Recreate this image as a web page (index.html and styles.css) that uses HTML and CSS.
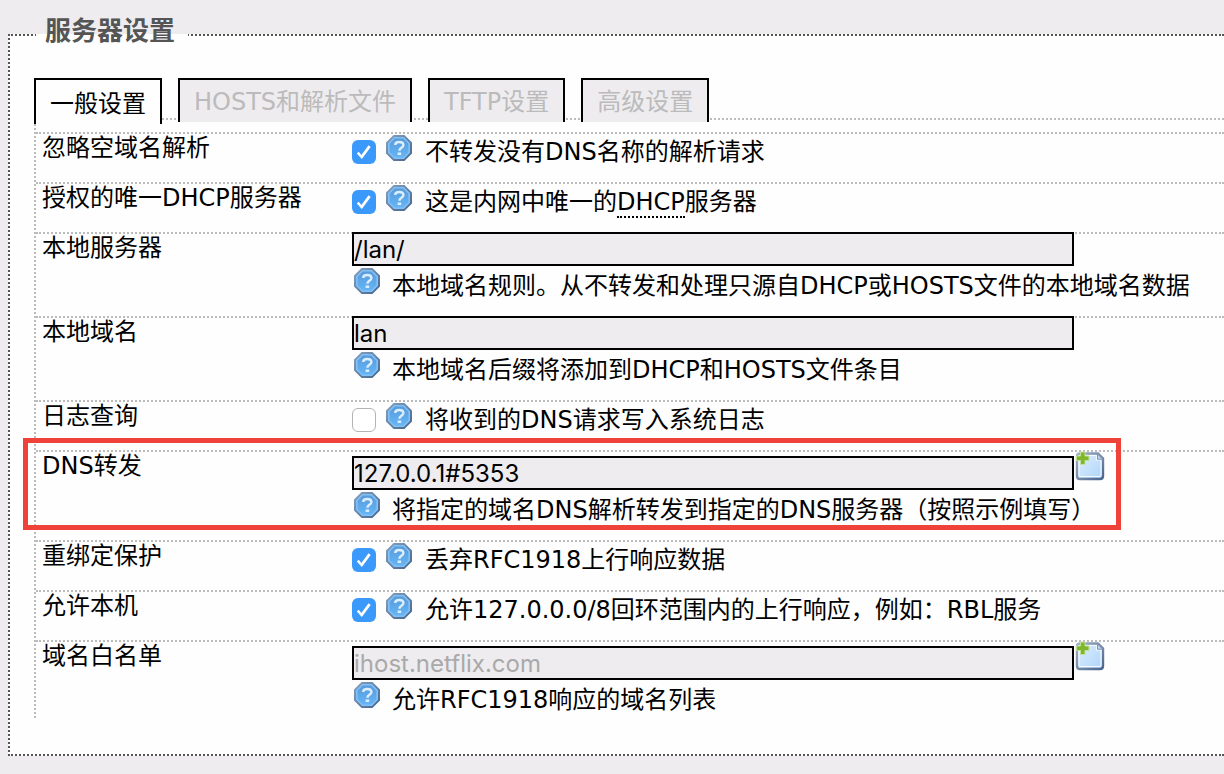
FILE: index.html
```
<!DOCTYPE html>
<html lang="zh-CN">
<head>
<meta charset="utf-8">
<title>服务器设置</title>
<link rel="stylesheet" href="styles.css">
</head>
<body>
<svg class="defs" aria-hidden="true">
  <defs>
    <linearGradient id="blue" x1="0" y1="0" x2="0" y2="1">
      <stop offset="0" stop-color="#5598d8"/><stop offset="1" stop-color="#66b8fa"/>
    </linearGradient>
    <linearGradient id="edge" x1="0" y1="0" x2="1" y2="1">
      <stop offset="0" stop-color="#86a0be"/><stop offset="1" stop-color="#45678f"/>
    </linearGradient>
    <linearGradient id="sheet" x1="0" y1="0" x2="1" y2="1">
      <stop offset="0" stop-color="#e0eefd"/><stop offset="1" stop-color="#acd5fb"/>
    </linearGradient>
    <linearGradient id="rim" x1="0" y1="0" x2="1" y2="1">
      <stop offset="0" stop-color="#a3b0c4"/><stop offset="1" stop-color="#4c6690"/>
    </linearGradient>
    <symbol id="help" viewBox="0 0 28 28">
      <path d="M9 2h10l7 7v10l-7 7H9l-7-7V9z" fill="url(#blue)" stroke="url(#edge)" stroke-width="2"/>
      <path d="M9.500 3.800h9l5.700 5.700v9l-5.700 5.700h-9l-5.700-5.700v-9z" fill="none" stroke="#84c0f3" stroke-width="1.600"/>
      <path d="M10.200 11C10.200 8.800 11.800 8 14.200 8s4.200 1 4.200 3.100c0 2.700-4 2.700-4 5.600" fill="none" stroke="#dceefe" stroke-width="2.400"/>
      <rect x="12.600" y="18.500" width="3.600" height="2.500" fill="#dceefe"/>
    </symbol>
    <symbol id="add" viewBox="0 0 30 30">
      <path d="M5 2.500h18l5 5V25q0 3-3 3H5q-3 0-3-3V5.500q0-3 3-3z" fill="url(#sheet)" stroke="url(#rim)" stroke-width="2.400"/>
      <path d="M5 4.500h16.500v4.500H26v15q0 1.500-1.500 1.500h-19Q4 25.500 4 24V5.500z" fill="none" stroke="#f3f9ff" stroke-width="1.200"/>
      <path d="M22.500 3v5.200h5.200z" fill="#c4d8ee" stroke="#7d93b2" stroke-width="1"/>
      <path d="M5.500 1h4.500v4h4v4.500h-4v4H5.500v-4h-4V5h4z" fill="#7fb82d" stroke="#c3e09a" stroke-width="1"/>
    </symbol>
  </defs>
</svg>
<form>
<fieldset class="panel">
  <legend class="title">服务器设置</legend>
  <nav class="tabs">
    <a class="tab active" href="#general">一般设置</a>
    <a class="tab" href="#hosts">HOSTS和解析文件</a>
    <a class="tab" href="#tftp">TFTP设置</a>
    <a class="tab" href="#advanced">高级设置</a>
  </nav>
  <div class="options" id="general">
    <div class="row">
      <label class="name" for="domainneeded">忽略空域名解析</label>
      <div class="field check">
        <input class="box" type="checkbox" id="domainneeded" checked>
        <svg class="help"><use href="#help"/></svg><span class="hint">不转发没有DNS名称的解析请求</span>
      </div>
    </div>
    <div class="row">
      <label class="name" for="authoritative">授权的唯一DHCP服务器</label>
      <div class="field check">
        <input class="box" type="checkbox" id="authoritative" checked>
        <svg class="help"><use href="#help"/></svg><span class="hint">这是内网中唯一的<abbr class="term">DHCP</abbr>服务器</span>
      </div>
    </div>
    <div class="row tall">
      <label class="name" for="local">本地服务器</label>
      <div class="field">
        <div class="entry"><input class="text" type="text" id="local" value="/lan/"></div>
        <div class="note"><svg class="help"><use href="#help"/></svg><span class="hint">本地域名规则。从不转发和处理只源自DHCP或HOSTS文件的本地域名数据</span></div>
      </div>
    </div>
    <div class="row tall">
      <label class="name" for="domain">本地域名</label>
      <div class="field">
        <div class="entry"><input class="text" type="text" id="domain" value="lan"></div>
        <div class="note"><svg class="help"><use href="#help"/></svg><span class="hint">本地域名后缀将添加到DHCP和HOSTS文件条目</span></div>
      </div>
    </div>
    <div class="row">
      <label class="name" for="logqueries">日志查询</label>
      <div class="field check">
        <input class="box" type="checkbox" id="logqueries">
        <svg class="help"><use href="#help"/></svg><span class="hint">将收到的DNS请求写入系统日志</span>
      </div>
    </div>
    <div class="row list marked">
      <label class="name" for="server">DNS转发</label>
      <div class="field">
        <div class="entry"><input class="text" type="text" id="server" value="127.0.0.1#5353"><button class="add" type="button" aria-label="添加"><svg class="sheet"><use href="#add"/></svg></button></div>
        <div class="note"><svg class="help"><use href="#help"/></svg><span class="hint">将指定的域名DNS解析转发到指定的DNS服务器（按照示例填写）</span></div>
      </div>
    </div>
    <div class="row">
      <label class="name" for="rebind">重绑定保护</label>
      <div class="field check">
        <input class="box" type="checkbox" id="rebind" checked>
        <svg class="help"><use href="#help"/></svg><span class="hint">丢弃RFC1918上行响应数据</span>
      </div>
    </div>
    <div class="row">
      <label class="name" for="localhost">允许本机</label>
      <div class="field check">
        <input class="box" type="checkbox" id="localhost" checked>
        <svg class="help"><use href="#help"/></svg><span class="hint">允许127.0.0.0/8回环范围内的上行响应，例如：RBL服务</span>
      </div>
    </div>
    <div class="row list last">
      <label class="name" for="whitelist">域名白名单</label>
      <div class="field">
        <div class="entry"><input class="text" type="text" id="whitelist" placeholder="ihost.netflix.com"><button class="add" type="button" aria-label="添加"><svg class="sheet"><use href="#add"/></svg></button></div>
        <div class="note"><svg class="help"><use href="#help"/></svg><span class="hint">允许RFC1918响应的域名列表</span></div>
      </div>
    </div>
  </div>
</fieldset>
</form>
</body>
</html>
```
FILE: styles.css
```
* { box-sizing: border-box; }

body {
  margin: 0;
  padding: 17px 0 18px 8px;
  background: #eeecef;
  color: #000;
  font: 24px/28px "DejaVu Sans", "Noto Sans CJK SC", sans-serif;
}

.defs { position: absolute; width: 0; height: 0; }

.panel {
  margin: 0;
  padding: 25px 0 36px 24px;
  border: 2px dotted #555;
  border-right: 0;
  background: #fefefe;
}

.title {
  margin-left: 2px;
  padding: 0 13px 8px 9px;
  color: #555;
  font-size: 26px;
  font-weight: bold;
  line-height: 28px;
}

.tabs {
  display: flex;
  align-items: flex-start;
  gap: 16px;
  border-bottom: 2px dotted #bbb;
}

.tab {
  margin-bottom: -4px;
  padding: 2px 14px 0;
  border: 2px solid #000;
  border-bottom: 0;
  background: #eeecef;
  color: #bbb;
  line-height: 40px;
  text-decoration: none;
  white-space: nowrap;
}

.tab.active {
  margin-bottom: -6px;
  padding-top: 4px;
  background: #fefefe;
  color: #000;
}

.options {
  margin-top: 4px;
  padding-top: 8px;
  border-left: 2px dotted #bbb;
}

.row {
  position: relative;
  display: grid;
  grid-template-columns: 310px 1fr;
  min-height: 50px;
  padding-left: 6px;
  border-top: 2px dotted #bbb;
}

.row.tall { min-height: 84px; }
.row.list { min-height: 90px; }
.row.list.last { min-height: 78px; }

.field { min-width: 0; }

.check {
  display: flex;
  align-items: flex-start;
}

.box {
  appearance: none;
  display: grid;
  width: 24px;
  height: 24px;
  margin: 6px 9px 0 0;
  border: 1px solid #b4b4b4;
  border-radius: 6px;
  background: #fff;
}

.box:checked {
  border: 0;
  background: #3b99fc;
}

.box:checked::before {
  content: "";
  background: #fff;
  clip-path: polygon(20% 56%, 28% 49%, 39% 63%, 69% 22%, 78% 29%, 41% 79%);
}

.help {
  flex: none;
  width: 28px;
  height: 28px;
}

.hint {
  margin: 4px 0 0 12px;
  white-space: nowrap;
}

.term {
  border-bottom: 2px dotted #000;
  text-decoration: none;
}

.entry {
  display: flex;
  align-items: flex-start;
  margin-top: -2px;
}

.list .entry { margin-top: 4px; }

.text {
  flex: 1;
  min-width: 0;
  max-width: 722px;
  height: 34px;
  padding: 0;
  border: 2px solid #000;
  border-radius: 0;
  background: #eeecef;
  color: #000;
  font: 24px/30px Inter, "Noto Sans CJK SC", sans-serif;
}

.text::placeholder { color: #a9a9a9; opacity: 1; }

.add {
  flex: none;
  height: 30px;
  margin: -5px 0 0 1px;
  padding: 0;
  border: 0;
  background: none;
}

.sheet {
  display: block;
  width: 30px;
  height: 30px;
}

.note {
  display: flex;
  align-items: flex-start;
  margin-top: 1px;
  padding-left: 1px;
}

.note .hint { margin: 5px 0 0 11px; }

/* Frame around the setting that needs attention */
.marked::after {
  content: "";
  position: absolute;
  top: -14px;
  right: 103px;
  bottom: 10px;
  left: -13px;
  border: 5px solid #ef4238;
  pointer-events: none;
}
```
